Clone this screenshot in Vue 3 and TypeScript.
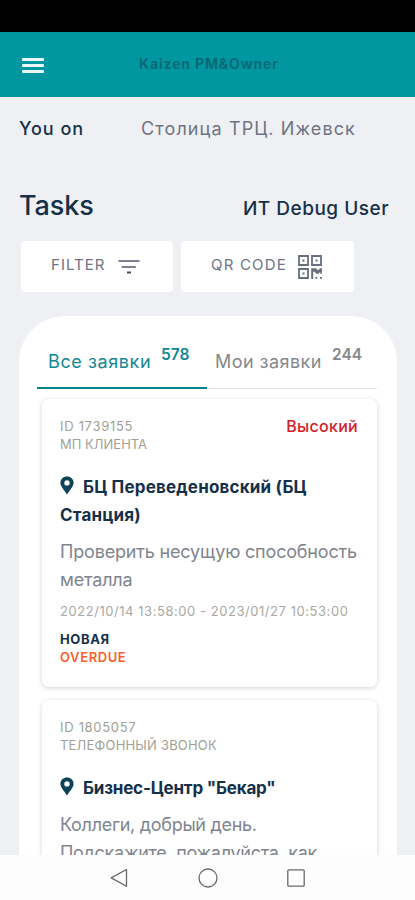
<script setup lang="ts">
interface Task {
  id: string
  source: string
  priority?: string
  place: string
  description: string[]
  period?: string
  status?: string
  overdue?: boolean
}

const tabs = [
  { label: 'Все заявки', count: 578, active: true },
  { label: 'Мои заявки', count: 244, active: false },
]

const tasks: Task[] = [
  {
    id: '1739155',
    source: 'МП КЛИЕНТА',
    priority: 'Высокий',
    place: 'БЦ Переведеновский (БЦ Станция)',
    description: ['Проверить несущую способность', 'металла'],
    period: '2022/10/14 13:58:00 - 2023/01/27 10:53:00',
    status: 'НОВАЯ',
    overdue: true,
  },
  {
    id: '1805057',
    source: 'ТЕЛЕФОННЫЙ ЗВОНОК',
    place: 'Бизнес-Центр "Бекар"',
    description: ['Коллеги, добрый день.', 'Подскажите, пожалуйста, как'],
  },
]
</script>

<template>
  <div class="screen">
    <div class="status-bar"></div>
    <header class="app-bar">
      <button class="menu" aria-label="Menu"><i></i><i></i><i></i></button>
      <h1>Kaizen PM&amp;Owner</h1>
    </header>

    <main class="content">
      <div class="location">
        <span class="location-label">You on</span>
        <span class="location-name">Столица ТРЦ. Ижевск</span>
      </div>
      <div class="heading">
        <h2>Tasks</h2>
        <span class="user">ИТ Debug User</span>
      </div>
      <div class="actions">
        <button class="action filter">
          <span>FILTER</span>
          <svg width="22" height="16" viewBox="0 0 22 16">
            <path d="M0.5 2H21.5M3.7 8H17.8" fill="none" stroke="#7b8190" stroke-width="2" />
            <path d="M9 13.5H13" fill="none" stroke="#454d63" stroke-width="2" />
          </svg>
        </button>
        <button class="action qr">
          <span>QR CODE</span>
          <svg width="24" height="24" viewBox="0 0 24 24">
            <path d="M1 1H10V10H1ZM14 1H23V10H14ZM1 14H10V23H1Z" fill="none" stroke="#666e80" stroke-width="1.8" />
            <path d="M13.2 13.2H18L20 15.2L22 13.2H24V18.8H22.3V16.8L20.5 18.8H18.5L16.5 16.8H15.2V24H13.2ZM4.5 4.5h2v2h-2zM17.5 4.5h2v2h-2zM4.5 17.5h2v2h-2zM17.4 21.9h1.9v1.9h-1.9zM22 21.9h1.9v1.9h-1.9z" fill="#666e80" />
          </svg>
        </button>
      </div>

      <section class="panel">
        <nav class="tabs">
          <div v-for="tab in tabs" :key="tab.label" class="tab" :class="{ active: tab.active }">
            <span class="tab-label">{{ tab.label }}</span>
            <span class="count">{{ tab.count }}</span>
          </div>
        </nav>
        <article v-for="task in tasks" :key="task.id" class="card">
          <div class="card-top">
            <div class="meta">
              <div class="task-id">ID {{ task.id }}</div>
              <div>{{ task.source }}</div>
            </div>
            <span v-if="task.priority" class="priority">{{ task.priority }}</span>
          </div>
          <h3>
            <svg class="pin" width="14" height="19" viewBox="0 0 14 19">
              <path fill-rule="evenodd" d="M7 0.5C3.2 0.5 0.4 3.2 0.4 6.8C0.4 10 2.8 12.5 7 18.5C11.2 12.5 13.6 10 13.6 6.8C13.6 3.2 10.8 0.5 7 0.5ZM7 4.2A2.7 2.7 0 1 1 7 9.6A2.7 2.7 0 1 1 7 4.2Z" fill="#0d4257" />
            </svg>{{ task.place }}
          </h3>
          <p class="description">
            <span v-for="line in task.description" :key="line">{{ line }}</span>
          </p>
          <div v-if="task.period" class="period">{{ task.period }}</div>
          <div v-if="task.status" class="state">{{ task.status }}</div>
          <div v-if="task.overdue" class="state overdue">OVERDUE</div>
        </article>
      </section>
    </main>

    <footer class="system-nav">
      <svg width="18" height="20" viewBox="0 0 18 20"><path d="M16.5 1.5V18.3L1.2 9.9Z" /></svg>
      <svg width="20" height="20" viewBox="0 0 20 20"><circle cx="10" cy="10" r="9" /></svg>
      <svg width="18" height="18" viewBox="0 0 18 18"><rect x="0.8" y="0.8" width="16.4" height="16.4" rx="1" /></svg>
    </footer>
  </div>
</template>

<style>
body {
  background: #eef0f4;
}
</style>

<style scoped>
.screen {
  display: flex;
  flex-direction: column;
  height: 900px;
  overflow: hidden;
  background: #eef0f4;
  color: #153049;
  font-family: Inter, "Noto Sans", sans-serif;
}

h1, h2, h3, p {
  margin: 0;
}

button {
  border: 0;
  padding: 0;
  background: none;
  font: inherit;
}

.status-bar {
  flex: none;
  height: 32px;
  background: #000;
}

.app-bar {
  flex: none;
  display: flex;
  align-items: center;
  height: 65px;
  padding-left: 22px;
  background: #0097a0;
}

.menu {
  display: flex;
  flex-direction: column;
  gap: 3px;
  width: 22px;
  margin-top: 2px;
}

.menu i {
  height: 3px;
  border-radius: 1px;
  background: #e9f7f8;
}

h1 {
  margin: -1px 0 0 95px;
  color: #086a76;
  font-size: 14px;
  font-weight: 700;
  line-height: 20px;
  letter-spacing: 0.85px;
}

.content {
  flex: 1;
  min-height: 0;
  overflow: hidden;
}

.location {
  display: flex;
  height: 24px;
  margin-top: 20px;
  padding-left: 19px;
  font-size: 18px;
  line-height: 24px;
}

.location-label {
  width: 122px;
  font-weight: 500;
  letter-spacing: 1px;
}

.location-name {
  color: #6d7483;
  letter-spacing: 1.12px;
}

.heading {
  display: flex;
  justify-content: space-between;
  align-items: baseline;
  height: 36px;
  margin-top: 47px;
  padding: 0 26px 0 19px;
  line-height: 36px;
}

h2 {
  font-size: 27px;
  font-weight: 500;
  letter-spacing: -0.1px;
}

.user {
  font-size: 19px;
  font-weight: 500;
  letter-spacing: 0.5px;
}

.actions {
  display: flex;
  gap: 8px;
  margin-top: 17px;
  padding-left: 21px;
}

.action {
  display: flex;
  align-items: center;
  height: 51px;
  border-radius: 4px;
  background: #fff;
  color: #6d7483;
  font-size: 15px;
  line-height: 20px;
}

.action span {
  margin-top: -3px;
  letter-spacing: 1.05px;
}

.filter {
  gap: 12px;
  width: 152px;
  padding-left: 30px;
}

.action.qr span {
  letter-spacing: 1.2px;
}

.qr {
  gap: 11px;
  width: 173px;
  padding-left: 30px;
}

.panel {
  height: 700px;
  margin: 24px 18px 0 19px;
  padding: 0 20px 0 18px;
  border-radius: 46px 46px 0 0;
  background: #fff;
}

.tabs {
  display: flex;
  width: 340px;
  height: 73px;
}

.tab {
  display: flex;
  box-sizing: border-box;
  width: 170px;
  padding: 34px 0 0 8px;
  border-bottom: 1px solid #e6e8eb;
  color: #85878b;
  line-height: 24px;
}

.tab.active {
  padding-left: 11px;
  border-bottom: 2px solid #07838e;
  color: #128791;
}

.tab-label {
  width: 113px;
  font-size: 18px;
  letter-spacing: 0.6px;
  white-space: nowrap;
}

.tab:not(.active) .tab-label {
  width: 117px;
  letter-spacing: 0.45px;
}

.count {
  margin-top: -7px;
  font-size: 15.5px;
  font-weight: 600;
}

.card {
  box-sizing: border-box;
  width: 335px;
  height: 288px;
  margin: 10px 0 13px 5px;
  padding: 18px 18px 0;
  border-radius: 7px;
  box-shadow: 0 1px 5px rgb(0 0 0 / 18%);
}

.card-top {
  display: flex;
  justify-content: space-between;
  height: 36px;
}

.meta {
  color: #a19f95;
  font-size: 13px;
  line-height: 18px;
}

.task-id {
  letter-spacing: 0.7px;
}

.priority {
  margin: -2px 1px 0 0;
  color: #d32029;
  font-size: 16px;
  font-weight: 500;
  line-height: 22px;
  letter-spacing: 0.3px;
}

h3 {
  margin-top: 20px;
  font-size: 17px;
  font-weight: 700;
  line-height: 28px;
  letter-spacing: 0.18px;
}

.card:last-child .meta {
  letter-spacing: 0.2px;
}

.card:last-child h3 {
  letter-spacing: -0.2px;
}

.pin {
  margin-right: 9px;
  vertical-align: -2px;
}

.description {
  margin-top: 9px;
  color: #7f858e;
  font-size: 18px;
  line-height: 28px;
  letter-spacing: -0.18px;
}

.card:last-child .description {
  letter-spacing: -0.29px;
}

.description span {
  display: block;
  white-space: nowrap;
}

.period {
  margin-top: 8px;
  color: #aaa9a2;
  font-size: 13px;
  line-height: 18px;
  letter-spacing: 0.55px;
  white-space: nowrap;
}

.state {
  margin-top: 10px;
  font-size: 13px;
  font-weight: 700;
  line-height: 18px;
  letter-spacing: 0.6px;
}

.overdue {
  margin-top: 0;
  color: #fa602b;
  font-weight: 600;
}

.system-nav {
  flex: none;
  display: flex;
  align-items: center;
  gap: 70px;
  height: 45px;
  padding-left: 110px;
  background: #fdfdfd;
}

.system-nav svg {
  fill: none;
  stroke: #686868;
  stroke-width: 1.3;
  stroke-linejoin: round;
}

.system-nav svg:last-child {
  margin-left: -1px;
}
</style>
